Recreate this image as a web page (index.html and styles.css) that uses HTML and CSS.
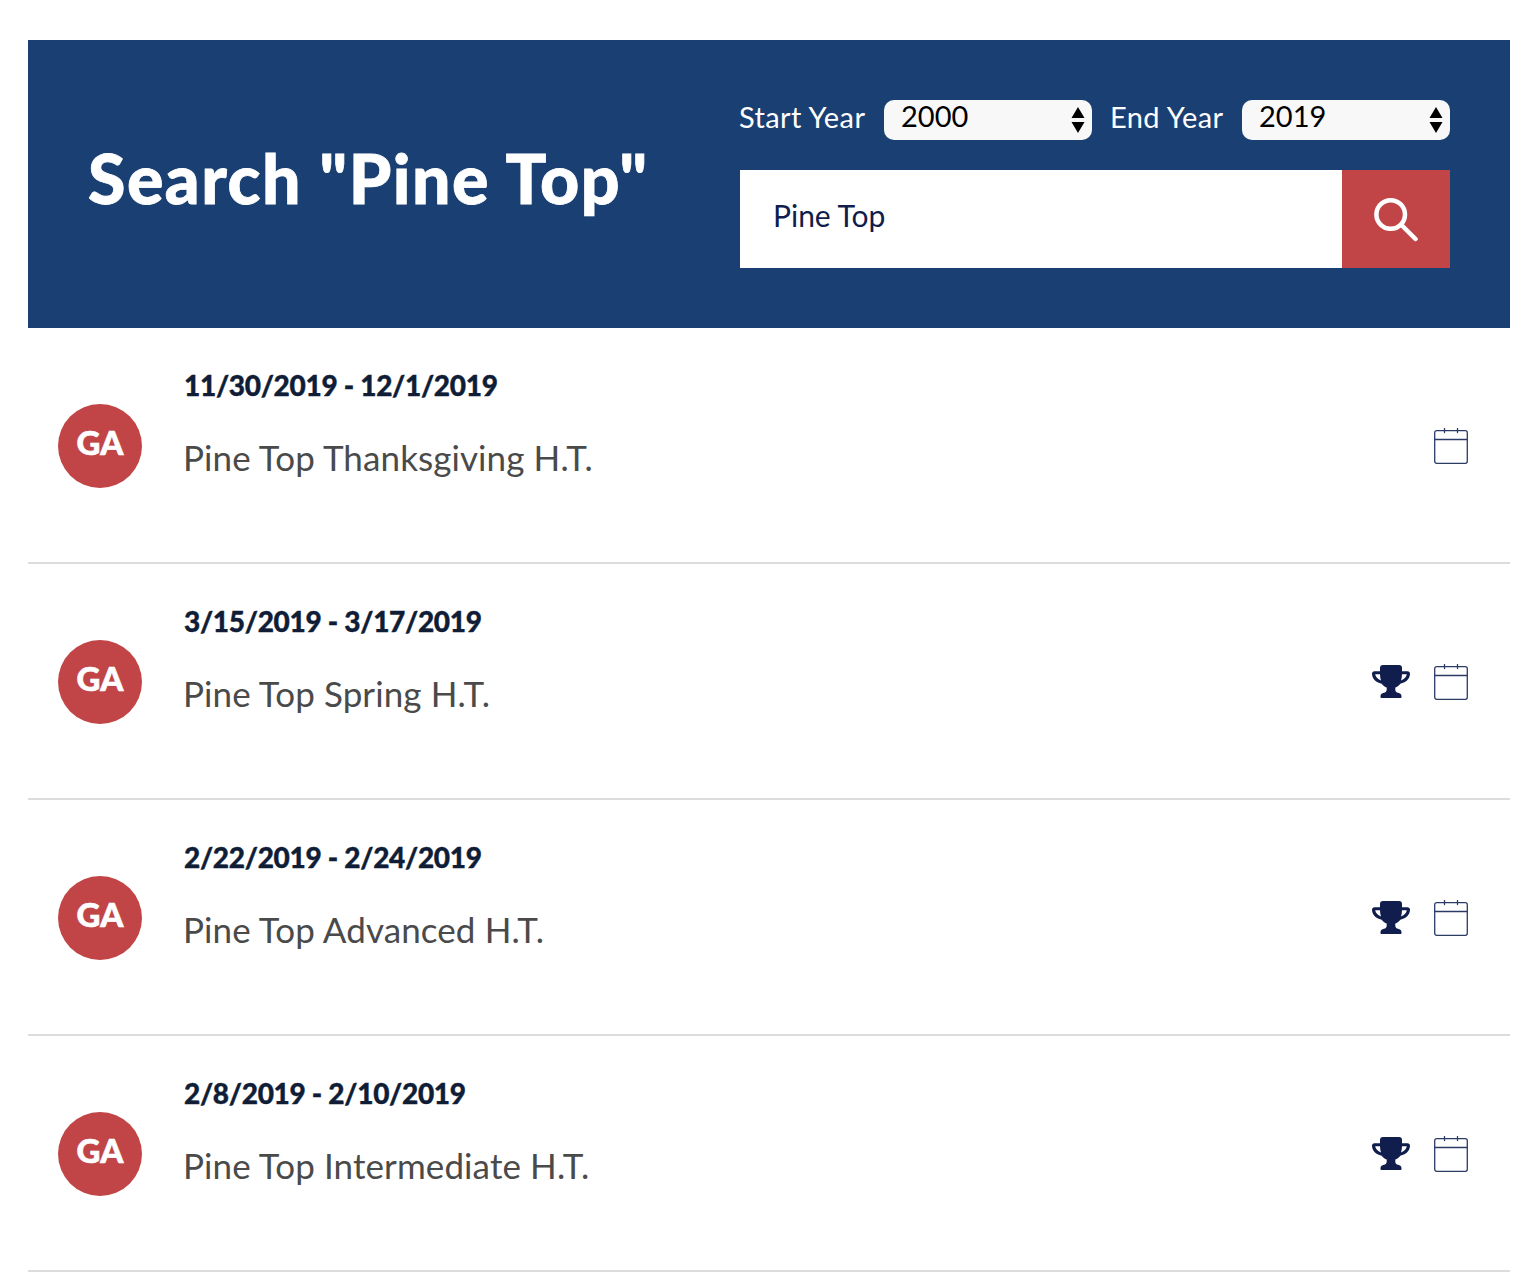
FILE: index.html
```html
<!DOCTYPE html>
<html lang="en">
<head>
  <meta charset="UTF-8">
  <title>Search</title>
  <link rel="stylesheet" href="styles.css">
</head>
<body>
  <svg class="sprites" width="0" height="0">
    <symbol id="trophy" viewBox="0 0 38 34">
      <path fill="#101d4d" fill-rule="evenodd" d="M11 0h16c2 0 3 1.200 3 3v3.200h5.500C37 6.200 38 7.200 38 8.500c0 4.800-3.500 9-9.700 10.200-1.300 1.800-3 3.100-5 3.800v2c0 1.800 1.100 3 2.800 3.300 1.700.3 3.400 1.500 3.400 3.200v1c0 .6-.4 1-1 1H9.500c-.6 0-1-.4-1-1v-1c0-1.700 1.700-2.900 3.400-3.200 1.700-.3 2.800-1.500 2.800-3.300v-2c-2-.7-3.700-2-5-3.800C3.500 17.500 0 13.300 0 8.500 0 7.200 1 6.200 2.500 6.200H8V3c0-1.800 1-3 3-3zM3.200 9.200c.5 2.600 2.300 5 5.800 6.200-.6-1.900-1-3.900-1-6.200zm31.600 0H30c0 2.300-.4 4.300-1 6.200 3.500-1.200 5.300-3.600 5.800-6.200z"/>
    </symbol>
    <symbol id="calendar" viewBox="0 0 34 36">
      <g fill="none" stroke="#2c3a66" stroke-width="1.300" stroke-linecap="round">
        <rect x=".7" y="2.700" width="32.600" height="32.600" rx="2"/>
        <path d="M.7 11.500h32.600M10.500 .6v4M23.500 .6v4"/>
      </g>
    </symbol>
  </svg>

  <header class="search-header">
    <h1>Search "Pine Top"</h1>
    <form class="search-form">
      <div class="year-row">
        <label for="startYear">Start Year</label>
        <div class="select-wrap">
          <select id="startYear"><option>2000</option></select>
          <svg class="select-arrows" viewBox="0 0 14 26"><path d="M7 0l6.500 11H.5zM7 26L.5 15h13z"/></svg>
        </div>
        <label for="endYear">End Year</label>
        <div class="select-wrap">
          <select id="endYear"><option>2019</option></select>
          <svg class="select-arrows" viewBox="0 0 14 26"><path d="M7 0l6.500 11H.5zM7 26L.5 15h13z"/></svg>
        </div>
      </div>
      <div class="search-row">
        <input type="text" value="Pine Top">
        <button type="button" aria-label="Search">
          <svg width="46" height="46" viewBox="0 0 46 46" fill="none" stroke="#fff" stroke-linecap="round">
            <circle cx="17.700" cy="18.500" r="14.300" stroke-width="4.500"/>
            <path d="M28.500 29l14 14" stroke-width="4.500"/>
          </svg>
        </button>
      </div>
    </form>
  </header>

  <ul class="event-list">
    <li class="event">
      <div class="avatar">GA</div>
      <div class="event-text">
        <div class="event-date">11/30/2019 - 12/1/2019</div>
        <div class="event-name">Pine Top Thanksgiving H.T.</div>
      </div>
      <div class="event-icons">
        <svg class="icon-calendar"><use href="#calendar"/></svg>
      </div>
    </li>
    <li class="event">
      <div class="avatar">GA</div>
      <div class="event-text">
        <div class="event-date">3/15/2019 - 3/17/2019</div>
        <div class="event-name">Pine Top Spring H.T.</div>
      </div>
      <div class="event-icons">
        <svg class="icon-trophy"><use href="#trophy"/></svg>
        <svg class="icon-calendar"><use href="#calendar"/></svg>
      </div>
    </li>
    <li class="event">
      <div class="avatar">GA</div>
      <div class="event-text">
        <div class="event-date">2/22/2019 - 2/24/2019</div>
        <div class="event-name">Pine Top Advanced H.T.</div>
      </div>
      <div class="event-icons">
        <svg class="icon-trophy"><use href="#trophy"/></svg>
        <svg class="icon-calendar"><use href="#calendar"/></svg>
      </div>
    </li>
    <li class="event">
      <div class="avatar">GA</div>
      <div class="event-text">
        <div class="event-date">2/8/2019 - 2/10/2019</div>
        <div class="event-name">Pine Top Intermediate H.T.</div>
      </div>
      <div class="event-icons">
        <svg class="icon-trophy"><use href="#trophy"/></svg>
        <svg class="icon-calendar"><use href="#calendar"/></svg>
      </div>
    </li>
  </ul>
</body>
</html>
```

FILE: styles.css
```css
body {
  font-family: Lato, "Open Sans", sans-serif;
  background: #fff;
  margin: 0;
  padding: 40px 12px 0 28px;
}
.sprites {
  display: block;
}
.search-header {
  display: flex;
  justify-content: space-between;
  height: 288px;
  padding: 60px;
  box-sizing: border-box;
  background-color: #1a4073;
  color: #fff;
}
h1 {
  margin: 40px 0 0;
  font-size: 68px;
  line-height: 76px;
  font-weight: 900;
  letter-spacing: 1.5px;
  -webkit-text-stroke: 0.8px #fff;
}
.search-form {
  width: 710px;
}
.year-row {
  display: flex;
  align-items: center;
  height: 40px;
  margin-bottom: 30px;
}
.year-row label {
  font-size: 29px;
  letter-spacing: 0.4px;
  width: 145px;
  margin-top: -8px;
  margin-left: -1px;
}
.year-row label[for="endYear"] {
  width: 131px;
  margin-left: 19px;
  text-indent: -1px;
}
.select-wrap {
  position: relative;
  width: 208px;
  height: 40px;
  border-radius: 10px;
  background: #f8f8f8;
}
.select-wrap select {
  display: block;
  width: 100%;
  height: 36px;
  margin-top: -3px;
  padding: 0 0 0 17px;
  border: none;
  background: transparent;
  color: #000;
  font-family: inherit;
  font-size: 29px;
  appearance: none;
}
.select-arrows {
  position: absolute;
  right: 7px;
  top: 7px;
  width: 14px;
  height: 26px;
  pointer-events: none;
}
.search-row {
  display: flex;
  height: 98px;
}
.search-row input {
  flex: 1;
  min-width: 0;
  padding: 0 33px 8px;
  border: none;
  background: #fff;
  color: #101d4d;
  font-family: inherit;
  font-size: 30px;
}
.search-row button {
  display: flex;
  align-items: center;
  justify-content: center;
  width: 108px;
  padding: 0;
  border: none;
  background-color: #c14547;
}
.event-list {
  list-style: none;
  margin: 0;
  padding: 0;
}
.event {
  display: flex;
  align-items: center;
  height: 234px;
  padding: 0 42px 0 30px;
  border-bottom: 2px solid #dcdcdc;
}
.avatar {
  display: flex;
  align-items: center;
  justify-content: center;
  width: 84px;
  height: 84px;
  margin-top: 2px;
  padding-bottom: 8px;
  box-sizing: border-box;
  border-radius: 50%;
  background-color: #c14547;
  color: #fff;
  font-size: 33px;
  font-weight: 900;
  -webkit-text-stroke: 0.6px #fff;
}
.event-text {
  flex: 1;
  align-self: flex-start;
  margin: 39px 0 0 42px;
}
.event-date {
  font-size: 28px;
  line-height: 36px;
  font-weight: 900;
  font-kerning: none;
  letter-spacing: -0.3px;
  color: #101d36;
  -webkit-text-stroke: 0.4px #101d36;
}
.event-name {
  margin: 34px 0 0 -1px;
  font-size: 35px;
  line-height: 40px;
  letter-spacing: 0.1px;
  color: #4a4a4a;
}
.event-icons {
  display: flex;
  align-items: center;
  gap: 24px;
  margin-top: 1px;
}
.icon-trophy {
  width: 38px;
  height: 34px;
}
.icon-calendar {
  width: 34px;
  height: 36px;
}
```
